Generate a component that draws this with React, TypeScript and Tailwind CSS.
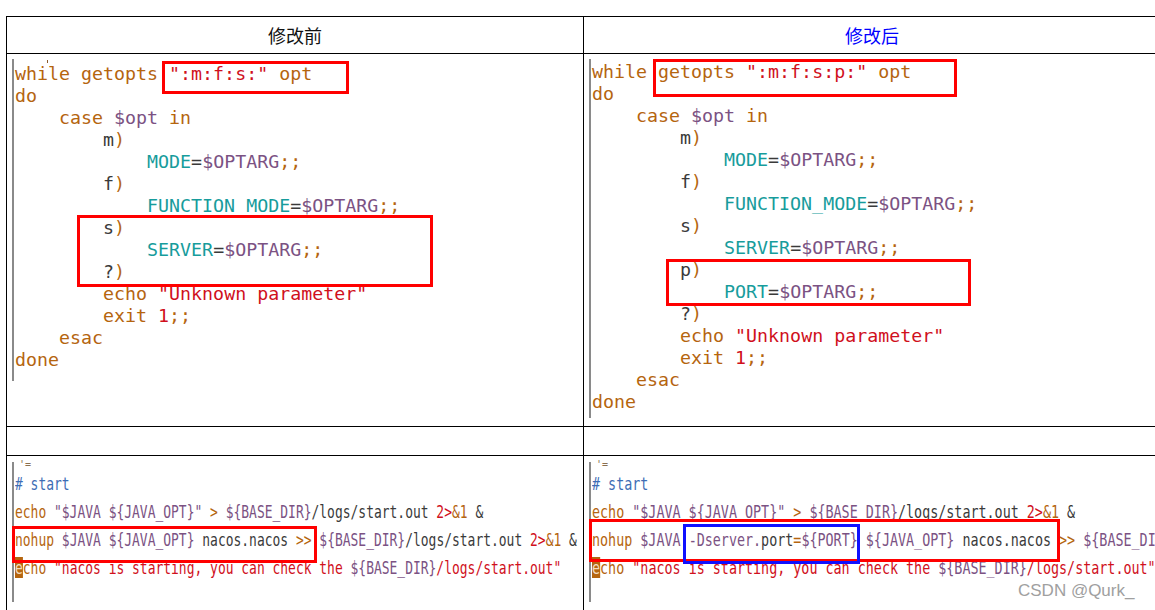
import React from 'react';

type Tok = [string, string];

const K = 'text-[#b5650f]';
const P = 'text-[#7b5283]';
const T = 'text-[#179c9c]';
const R = 'text-[#d0101c]';
const D = 'text-[#3a3a3a]';
const B = 'text-[#3d6db5]';

const before: Tok[][] = [
  [['while getopts ', K], ['":m:f:s:"', R], [' opt', K]],
  [['do', K]],
  [['    case ', K], ['$opt', P], [' in', K]],
  [['        m', D], [')', K]],
  [['            MODE', T], ['=', D], ['$OPTARG', P], [';;', K]],
  [['        f', D], [')', K]],
  [['            FUNCTION_MODE', T], ['=', D], ['$OPTARG', P], [';;', K]],
  [['        s', D], [')', K]],
  [['            SERVER', T], ['=', D], ['$OPTARG', P], [';;', K]],
  [['        ?', D], [')', K]],
  [['        echo ', K], ['"Unknown parameter"', R]],
  [['        exit ', K], ['1', R], [';;', K]],
  [['    esac', K]],
  [['done', K]],
];

const after: Tok[][] = [
  [['while getopts ', K], ['":m:f:s:p:"', R], [' opt', K]],
  [['do', K]],
  [['    case ', K], ['$opt', P], [' in', K]],
  [['        m', D], [')', K]],
  [['            MODE', T], ['=', D], ['$OPTARG', P], [';;', K]],
  [['        f', D], [')', K]],
  [['            FUNCTION_MODE', T], ['=', D], ['$OPTARG', P], [';;', K]],
  [['        s', D], [')', K]],
  [['            SERVER', T], ['=', D], ['$OPTARG', P], [';;', K]],
  [['        p', D], [')', K]],
  [['            PORT', T], ['=', D], ['$OPTARG', P], [';;', K]],
  [['        ?', D], [')', K]],
  [['        echo ', K], ['"Unknown parameter"', R]],
  [['        exit ', K], ['1', R], [';;', K]],
  [['    esac', K]],
  [['done', K]],
];

const echoLine: Tok[] = [
  ['echo ', K], ['"$JAVA ${JAVA_OPT}"', P], [' > ', K], ['${BASE_DIR}', P],
  ['/logs/start.out ', D], ['2>', R], ['&1', K], [' &', D],
];

const lastLine: Tok[] = [
  ['cho ', K], ['"nacos is starting, you can check the ', R], ['${BASE_DIR}', P],
  ['/logs/start.out"', R],
];

const startBefore: Tok[][] = [
  [['# start', B]],
  echoLine,
  [['nohup ', K], ['$JAVA ${JAVA_OPT}', P], [' nacos.nacos ', D], ['>>', K], [' ', D],
   ['${BASE_DIR}', P], ['/logs/start.out ', D], ['2>', R], ['&1', K], [' &', D]],
];

const startAfter: Tok[][] = [
  [['# start', B]],
  echoLine,
  [['nohup ', K], ['$JAVA ', P], ['-Dserver.', P], ['port', D], ['=', K], ['${PORT}', P],
   [' ${JAVA_OPT}', P], [' nacos.nacos ', D], ['>>', K], [' ', D], ['${BASE_DIR}', P],
   ['/logs/start.out ', D], ['2>', R], ['&1', K], [' &', D]],
];

const Line = ({ toks }: { toks: Tok[] }) => (
  <div className="whitespace-pre">
    {toks.map(([t, c], i) => (
      <span key={i} className={c}>{t}</span>
    ))}
  </div>
);

const Box = ({ cls }: { cls: string }) => (
  <div className={`absolute border-[3px] ${cls}`} />
);

const mono = { fontFamily: '"DejaVu Sans Mono", "Liberation Mono", monospace' };

// screenshot of the start script: tall, squeezed glyphs
const StartBlock = ({ rows, squeeze }: { rows: Tok[][]; squeeze: string }) => (
  <div className="mt-[6px] ml-[5px] w-[2px] h-[140px] bg-[#8a8a8a] relative">
    <div
      className={`absolute left-[3px] top-[8px] text-[18px] leading-[28px] origin-left ${squeeze}`}
      style={mono}
    >
      {rows.map((r, i) => (
        <Line key={i} toks={r} />
      ))}
      <div className="whitespace-pre">
        <span className="bg-[#b5650f] text-[#f3dcc0]">e</span>
        {lastLine.map(([t, c], i) => (
          <span key={i} className={c}>{t}</span>
        ))}
      </div>
    </div>
  </div>
);

export default function App() {
  return (
    <div className="relative w-[1155px] h-[610px] overflow-hidden bg-white">
      <div
        className="ml-[6px] mt-[16px] w-[1154px] border-t border-l border-black grid grid-cols-[577px_577px]"
        style={{ fontFamily: '"Noto Sans CJK SC", "Noto Sans", sans-serif' }}
      >
        <div className="h-[37px] border-r border-b border-black flex items-center justify-center text-[18px] text-[#111]">
          修改前
        </div>
        <div className="h-[37px] border-r border-b border-black flex items-center justify-center text-[18px] text-[#0000ff]">
          修改后
        </div>

        <div className="relative h-[373px] border-r border-b border-black overflow-hidden">
          <div className="mt-[5px] ml-[5px] flex">
            <div className="w-[2px] h-[322px] bg-[#8a8a8a]" />
            <div className="pt-[4px] pl-[1px] text-[18.3px] leading-[22px]" style={mono}>
              {before.map((r, i) => (
                <Line key={i} toks={r} />
              ))}
            </div>
          </div>
          <div className="absolute left-[40px] top-[6px] w-[1px] h-[3px] bg-[#8a5a2a]" />
          <Box cls="border-[#f00] left-[155px] top-[7px] w-[187px] h-[33px]" />
          <Box cls="border-[#f00] left-[70px] top-[161px] w-[356px] h-[72px]" />
        </div>

        <div className="relative h-[373px] border-r border-b border-black overflow-hidden">
          <div className="mt-[5px] ml-[5px] flex">
            <div className="w-[2px] h-[359px] bg-[#8a8a8a]" />
            <div className="pt-[2px] pl-[1px] text-[18.3px] leading-[22px]" style={mono}>
              {after.map((r, i) => (
                <Line key={i} toks={r} />
              ))}
            </div>
          </div>
          <Box cls="border-[#f00] left-[69px] top-[5px] w-[304px] h-[38px]" />
          <Box cls="border-[#f00] left-[82px] top-[205px] w-[305px] h-[47px]" />
        </div>

        <div className="h-[29px] border-r border-b border-black" />
        <div className="h-[29px] border-r border-b border-black" />

        <div className="relative h-[160px] border-r border-black overflow-hidden">
          <StartBlock rows={startBefore} squeeze="scale-x-[0.72]" />
          <div className="absolute left-[12px] top-[4px] text-[10px] leading-none text-[#8a7050]" style={mono}>'=</div>
          <Box cls="border-[#f00] left-[5px] top-[70px] w-[305px] h-[37px]" />
        </div>
        <div className="relative h-[160px] border-r border-black overflow-hidden">
          <StartBlock rows={startAfter} squeeze="scale-x-[0.743]" />
          <div className="absolute left-[12px] top-[4px] text-[10px] leading-none text-[#8a7050]" style={mono}>'=</div>
          <Box cls="border-[#f00] left-[5px] top-[63px] w-[471px] h-[43px]" />
          <Box cls="border-[#1010ff] left-[99px] top-[68px] w-[177px] h-[40px]" />
        </div>
      </div>
      <div
        className="absolute left-[1018px] top-[579px] text-[17px] leading-[24px] text-[#a0a0a0]"
        style={{ fontFamily: '"Liberation Sans", Arial, sans-serif' }}
      >
        CSDN @Qurk_
      </div>
    </div>
  );
}
